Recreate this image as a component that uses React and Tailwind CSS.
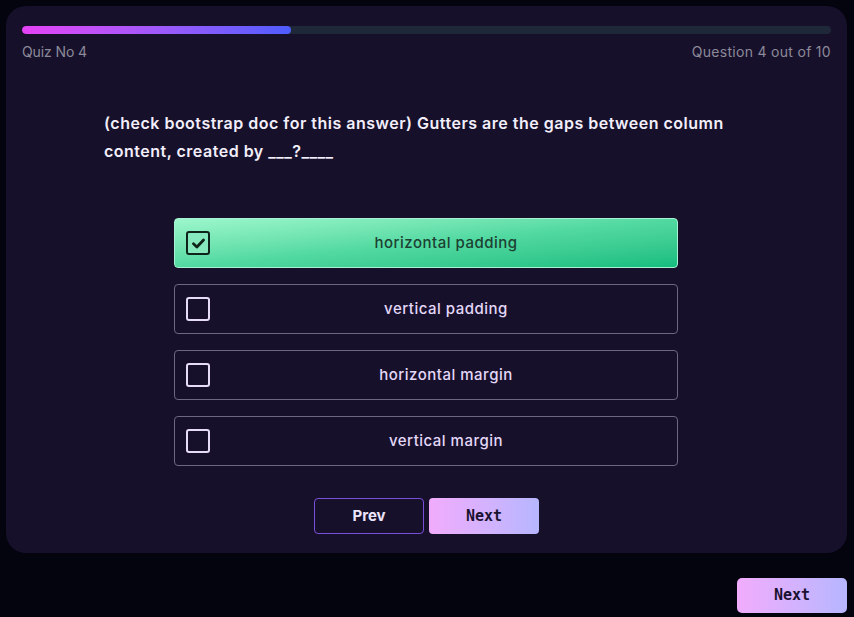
import React from "react";

const options = [
  "horizontal padding",
  "vertical padding",
  "horizontal margin",
  "vertical margin",
];

function Check({ checked }) {
  if (checked) {
    return (
      <div className="w-6 h-6 rounded-[3px] border-[2.5px] border-[#10231b] bg-[#86e9bd] flex items-center justify-center shrink-0">
        <svg width="15" height="15" viewBox="0 0 14 14" fill="none">
          <path d="M2.3 7.3 L5.5 10.3 L11.7 3.7" stroke="#10231b" strokeWidth="2.6" strokeLinecap="round" strokeLinejoin="round" />
        </svg>
      </div>
    );
  }
  return <div className="w-6 h-6 rounded-[3px] border-2 border-[#e6dcf8] shrink-0" />;
}

export default function App() {
  const font = { fontFamily: "Inter, 'Noto Sans', sans-serif" };
  const mono = { fontFamily: "'DejaVu Sans Mono', monospace" };
  return (
    <div className="min-h-screen w-full bg-[#04040f] pt-[6px] pl-[6px] pr-[7px] flex flex-col" style={font}>
      <div className="w-full rounded-[20px] bg-[#17102b] px-4 pt-5 pb-[19px] flex flex-col">
        <div className="h-2 w-full rounded-full bg-[#1e2838] overflow-hidden">
          <div className="h-2 w-[269px] rounded-full bg-gradient-to-r from-[#e541f5] to-[#4d5cff]" />
        </div>
        <div className="mt-2 flex justify-between text-[14px] leading-5 text-[#8c8a99]">
          <span className="tracking-[-0.1px]">Quiz No 4</span>
          <span className="tracking-[0.3px]">Question 4 out of 10</span>
        </div>
        <div className="mt-[47px] ml-[82px] w-[645px] text-[16px] leading-[28px] font-semibold text-[#f2eefa] tracking-[0.5px]">
          (check bootstrap doc for this answer) Gutters are the gaps between column content, created by ___?____
        </div>
        <div className="mt-[53px] ml-[152px] w-[504px] flex flex-col gap-4">
          {options.map((o, i) =>
            i === 0 ? (
              <div key={o} className="h-[50px] rounded-[4px] border border-[#a6f2d2] bg-gradient-to-br from-[#9cf7cc] via-[#52d9a2] to-[#12bd7f] flex items-center pl-[11px] pr-0">
                <Check checked />
                <div className="flex-1 pl-[5px] text-center text-[15px] tracking-[0.5px] text-[#1d4032] font-medium">{o}</div>
              </div>
            ) : (
              <div key={o} className="h-[50px] rounded-[4px] border border-[#6e6683] flex items-center pl-[11px]">
                <Check />
                <div className="flex-1 pl-[5px] text-center text-[15px] tracking-[0.5px] text-[#e4d8f8] font-medium">{o}</div>
              </div>
            )
          )}
        </div>
        <div className="mt-8 flex justify-center gap-[5px]">
          <button className="w-[110px] h-9 rounded-[4px] border border-[#7a4fd8] text-[#ece4fa] text-[15px] font-bold bg-transparent">
            Prev
          </button>
          <button
            className="w-[110px] h-9 rounded-[4px] bg-gradient-to-r from-[#f1acfc] to-[#b6b6ff] text-[#1a1230] text-[15px] font-bold"
            style={mono}
          >
            Next
          </button>
        </div>
      </div>
      <div className="flex justify-end mt-[25px]">
        <button
          className="w-[110px] h-[35px] rounded-[5px] bg-gradient-to-r from-[#f1acfc] to-[#b6b6ff] text-[#1a1230] text-[15px] font-bold"
          style={mono}
        >
          Next
        </button>
      </div>
    </div>
  );
}
